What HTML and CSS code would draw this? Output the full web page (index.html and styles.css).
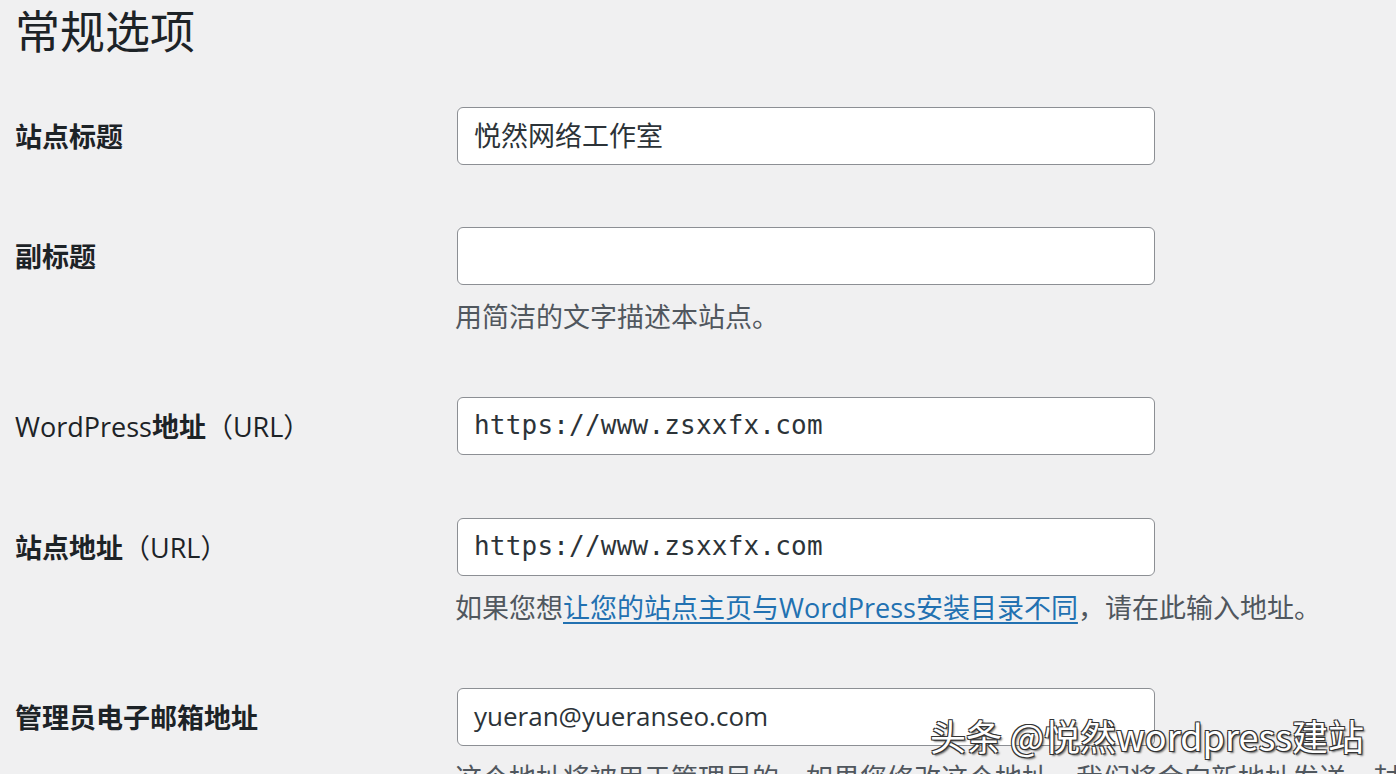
FILE: index.html
```html
<!DOCTYPE html>
<html lang="zh-CN">
<head>
<meta charset="utf-8">
<title>常规选项</title>
<link rel="stylesheet" href="styles.css">
</head>
<body>
<div class="page">
  <h1 class="title">常规选项</h1>
  <div class="form">
    <div class="row">
      <div class="label">站点标题</div>
      <div class="field">
        <div class="input">悦然网络工作室</div>
      </div>
    </div>
    <div class="row">
      <div class="label">副标题</div>
      <div class="field">
        <div class="input"></div>
        <p class="desc">用简洁的文字描述本站点。</p>
      </div>
    </div>
    <div class="row">
      <div class="label"><span class="latin">WordPress</span>地址<span class="latin">（URL）</span></div>
      <div class="field">
        <div class="input mono">https://www.zsxxfx.com</div>
      </div>
    </div>
    <div class="row">
      <div class="label">站点地址<span class="latin">（URL）</span></div>
      <div class="field">
        <div class="input mono">https://www.zsxxfx.com</div>
        <p class="desc">如果您想<a class="link" href="#">让您的站点主页与WordPress安装目录不同</a>，请在此输入地址。</p>
      </div>
    </div>
    <div class="row">
      <div class="label">管理员电子邮箱地址</div>
      <div class="field">
        <div class="input email">yueran@yueranseo.com</div>
        <p class="desc">这个地址将被用于管理目的。如果您修改这个地址，我们将会向新地址发送一封电子邮件来确认。</p>
      </div>
    </div>
  </div>
  <div class="watermark">头条 @悦然wordpress建站</div>
</div>
</body>
</html>
```

FILE: styles.css
```css
html, body {
  margin: 0;
  padding: 0;
  background: #f0f0f1;
  overflow: hidden;
}
body {
  font-family: "Open Sans", "Noto Sans CJK SC", sans-serif;
  color: #1d2327;
  width: 1396px;
  height: 774px;
}
.page {
  position: relative;
  height: 774px;
  padding: 0 0 0 15px;
  box-sizing: border-box;
  overflow: hidden;
}
.title {
  margin: 0 0 16px 0;
  font-family: "Noto Sans CJK SC", sans-serif;
  font-size: 45px;
  line-height: 60px;
  font-weight: 400;
  color: #1d2327;
}
.form {
  display: flex;
  flex-direction: column;
}
.row {
  display: grid;
  grid-template-columns: 442px 698px;
  padding: 31px 0;
}
.label {
  font-family: "Noto Sans CJK SC", sans-serif;
  font-size: 27px;
  line-height: 58px;
  font-weight: 700;
  color: #1d2327;
  white-space: nowrap;
}
.label .latin {
  font-family: "Open Sans", "Noto Sans CJK SC", sans-serif;
  font-weight: 400;
}
.field {
  display: flex;
  flex-direction: column;
}
.input {
  height: 58px;
  box-sizing: border-box;
  background: #fff;
  border: 1.5px solid #8c8f94;
  border-radius: 6px;
  padding: 0 16px;
  font-family: "Open Sans", "Noto Sans CJK SC", sans-serif;
  font-size: 27px;
  line-height: 55px;
  color: #2c3338;
  white-space: nowrap;
}
.input.email {
  font-size: 26px;
}
.input.mono {
  font-family: "DejaVu Sans Mono", "Liberation Mono", monospace;
  font-size: 26px;
  letter-spacing: 0.2px;
}
.desc {
  margin: 14px 0 0 -2px;
  font-size: 27px;
  line-height: 36px;
  color: #50575e;
  white-space: nowrap;
}
.link {
  color: #2271b1;
  text-decoration: underline;
  text-underline-offset: 4px;
}
.watermark {
  position: absolute;
  left: 930px;
  top: 710px;
  font-family: "Noto Sans CJK SC", sans-serif;
  font-size: 36px;
  line-height: 50px;
  color: #ffffff;
  white-space: nowrap;
  text-shadow: 1px 1px 0 #333, -1px -1px 0 #333, 1px -1px 0 #333, -1px 1px 0 #333, 2px 2px 2px rgba(0,0,0,0.6);
}
```
